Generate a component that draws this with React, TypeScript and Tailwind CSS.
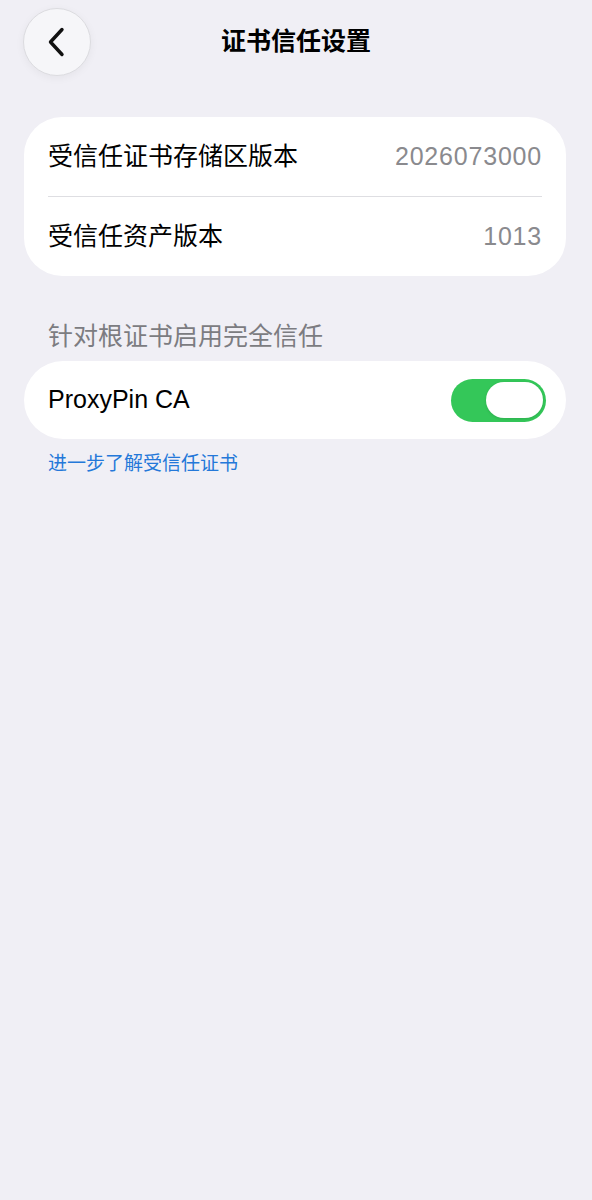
import { useState } from 'react';

const font = "font-['Liberation_Sans','Noto_Sans_CJK_SC',sans-serif]";

const Row = ({ label, value }: { label: string; value: string }) => (
  <div className="flex items-center justify-between h-[79px] px-[24px]">
    <span className="text-[25px] text-black">{label}</span>
    <span className="text-[25px] text-[#8a8a8e] tracking-[0.8px]">{value}</span>
  </div>
);

const App = () => {
  const [trusted, setTrusted] = useState(true);

  return (
    <div className={`min-h-[1200px] w-full bg-[#f0eff5] ${font}`}>
      <header className="grid grid-cols-[68px_1fr_68px] items-center px-[23px] pt-[8px]">
        <button className="w-[68px] h-[68px] rounded-full bg-[#f6f6f9] border border-[#dcdce0] shadow-[0_2px_8px_rgba(0,0,0,0.05)] flex items-center justify-center">
          <svg width="22" height="30" viewBox="0 0 22 30" fill="none">
            <path
              d="M16 2.5 L4.5 15 L16 27.5"
              stroke="#111"
              strokeWidth="3.4"
              strokeLinecap="round"
              strokeLinejoin="round"
            />
          </svg>
        </button>
        <h1 className="text-center text-[25px] font-semibold text-black">证书信任设置</h1>
        <div />
      </header>

      <section className="ml-[24px] mr-[26px] mt-[41px] bg-white rounded-[38px] overflow-hidden">
        <Row label="受信任证书存储区版本" value="2026073000" />
        <div className="mx-[24px] h-px bg-[#dedee2]" />
        <Row label="受信任资产版本" value="1013" />
      </section>

      <div className="px-[48px] mt-[45px] h-[30px] leading-[30px] text-[25px] text-[#7c7c81]">
        针对根证书启用完全信任
      </div>

      <section className="ml-[24px] mr-[26px] mt-[10px] h-[78px] bg-white rounded-full flex items-center justify-between pl-[24px] pr-[20px]">
        <span className="text-[25px] text-black">ProxyPin CA</span>
        <button
          onClick={() => setTrusted(!trusted)}
          className={`relative w-[95px] h-[43px] rounded-full transition-colors ${
            trusted ? 'bg-[#34c759]' : 'bg-[#e3e3e8]'
          }`}
        >
          <span
            className={`absolute top-[3.5px] h-[36px] w-[57px] rounded-full bg-white shadow-[0_1px_3px_rgba(0,0,0,0.12)] transition-all ${
              trusted ? 'right-[3.5px]' : 'left-[3.5px]'
            }`}
          />
        </button>
      </section>

      <a href="#" className="block px-[48px] mt-[13px] text-[19px] leading-[24px] text-[#2478d9]">
        进一步了解受信任证书
      </a>
    </div>
  );
};

export default App;
